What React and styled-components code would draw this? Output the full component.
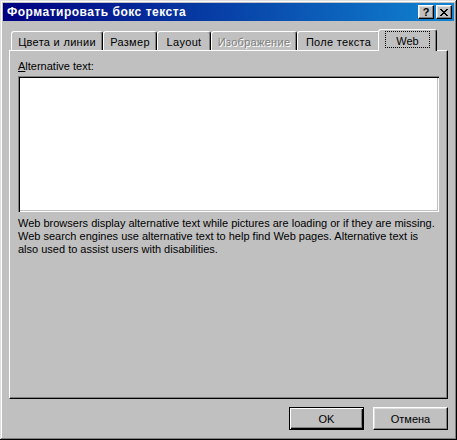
import React from 'react';
import styled, { createGlobalStyle } from 'styled-components';

const Global = createGlobalStyle`
  html, body { margin: 0; padding: 0; background: #c0c0c0; }
  body { font-family: "Liberation Sans", Arial, sans-serif; font-size: 11px; color: #000; }
  * { box-sizing: border-box; }
`;

const Window = styled.div`
  width: 457px;
  height: 440px;
  background: #c0c0c0;
  padding: 3px;
  box-shadow: inset -1px -1px #000, inset 1px 1px #dfdfdf, inset -2px -2px #808080, inset 2px 2px #fff;
  display: flex;
  flex-direction: column;
`;

const TitleBar = styled.div`
  height: 18px;
  display: flex;
  align-items: center;
  padding: 0 2px 0 4px;
  background: linear-gradient(to right, #000080, #1084d0);
`;

const Title = styled.div`
  flex: 1;
  color: #fff;
  font-weight: bold;
  font-size: 12px;
  letter-spacing: 0.5px;
  line-height: 18px;
  white-space: nowrap;
`;

const CaptionButton = styled.div`
  width: 16px;
  height: 14px;
  margin-left: ${p => p.$gap || 0}px;
  background: #c0c0c0;
  border: 1px solid;
  border-color: #fff #000 #000 #fff;
  box-shadow: inset -1px -1px #808080, inset 1px 1px #dfdfdf;
  display: flex;
  align-items: center;
  justify-content: center;
  font-weight: bold;
  font-size: 11px;
  line-height: 12px;
`;

const Body = styled.div`
  flex: 1;
  display: flex;
  flex-direction: column;
  padding: 8px 6px 7px 6px;
`;

const TabStrip = styled.div`
  height: 21px;
  display: flex;
  align-items: flex-end;
  padding-left: 2px;
`;

const Tab = styled.div`
  width: ${p => p.$w}px;
  height: 19px;
  padding-top: 4px;
  line-height: 13px;
  text-align: center;
  white-space: nowrap;
  letter-spacing: 0.3px;
  background: #c0c0c0;
  border: 1px solid;
  border-bottom: none;
  border-color: #fff #000 transparent #fff;
  border-radius: 3px 3px 0 0;
  box-shadow: inset -1px 0 #808080;
  color: ${p => (p.$disabled ? '#808080' : '#000')};
  text-shadow: ${p => (p.$disabled ? '1px 1px #fff' : 'none')};
`;

const ActiveTab = styled.div`
  position: relative;
  z-index: 1;
  width: ${p => p.$w}px;
  height: 22px;
  margin-left: -2px;
  margin-bottom: -1px;
  padding-top: 1px;
  display: flex;
  justify-content: center;
  background: #c0c0c0;
  border: 1px solid;
  border-bottom: none;
  border-color: #fff #000 transparent #fff;
  border-radius: 3px 3px 0 0;
  box-shadow: inset -1px 0 #808080;
`;

const Focus = styled.div`
  width: 45px;
  height: 17px;
  padding-top: 3px;
  line-height: 13px;
  text-align: center;
  border: 1px dotted #000;
`;

const Panel = styled.div`
  flex: 1;
  display: flex;
  flex-direction: column;
  padding: 9px 8px 0 8px;
  border: 1px solid;
  border-color: #fff #000 #000 #fff;
  box-shadow: inset -1px -1px #808080;
`;

const Label = styled.label`
  line-height: 13px;
  margin-bottom: 3px;
`;

const TextBox = styled.textarea`
  display: block;
  width: 100%;
  height: 136px;
  margin: 0;
  padding: 2px;
  resize: none;
  outline: none;
  border: none;
  background: #fff;
  font: inherit;
  box-shadow: inset 1px 1px #808080, inset 2px 2px #000, inset -1px -1px #fff, inset -2px -2px #c0c0c0;
`;

const Note = styled.p`
  margin: 5px 0 0 0;
  line-height: 13px;
`;

const ButtonRow = styled.div`
  display: flex;
  justify-content: flex-end;
  gap: 9px;
  margin-top: 8px;
`;

const Button = styled.button`
  width: 75px;
  height: 23px;
  padding: 0;
  font: inherit;
  color: #000;
  background: #c0c0c0;
  border: 1px solid;
  border-color: ${p => (p.$default ? '#000' : '#fff #000 #000 #fff')};
  box-shadow: ${p =>
    p.$default
      ? 'inset 1px 1px #fff, inset -1px -1px #000, inset -2px -2px #808080'
      : 'inset -1px -1px #808080, inset 1px 1px #dfdfdf'};
`;

const CloseGlyph = () => (
  <svg width="8" height="7" viewBox="0 0 8 7" shapeRendering="crispEdges">
    <path
      fill="#000"
      d="M0 0h2v1H0zM6 0h2v1H6zM1 1h2v1H1zM5 1h2v1H5zM2 2h4v1H2zM3 3h2v1H3zM2 4h4v1H2zM1 5h2v1H1zM5 5h2v1H5zM0 6h2v1H0zM6 6h2v1H6z"
    />
  </svg>
);

export default function App() {
  return (
    <>
      <Global />
      <Window>
        <TitleBar>
          <Title>Форматировать бокс текста</Title>
          <CaptionButton>?</CaptionButton>
          <CaptionButton $gap={2}>
            <CloseGlyph />
          </CaptionButton>
        </TitleBar>
        <Body>
          <TabStrip>
            <Tab $w={92}>Цвета и линии</Tab>
            <Tab $w={54}>Размер</Tab>
            <Tab $w={54}>Layout</Tab>
            <Tab $w={86} $disabled>Изображение</Tab>
            <Tab $w={83}>Поле текста</Tab>
            <ActiveTab $w={59}>
              <Focus>Web</Focus>
            </ActiveTab>
          </TabStrip>
          <Panel>
            <Label>
              <u>A</u>lternative text:
            </Label>
            <TextBox />
            <Note>
              Web browsers display alternative text while pictures are loading or if they are missing.
              <br />
              Web search engines use alternative text to help find Web pages. Alternative text is
              <br />
              also used to assist users with disabilities.
            </Note>
          </Panel>
          <ButtonRow>
            <Button $default>OK</Button>
            <Button>Отмена</Button>
          </ButtonRow>
        </Body>
      </Window>
    </>
  );
}
